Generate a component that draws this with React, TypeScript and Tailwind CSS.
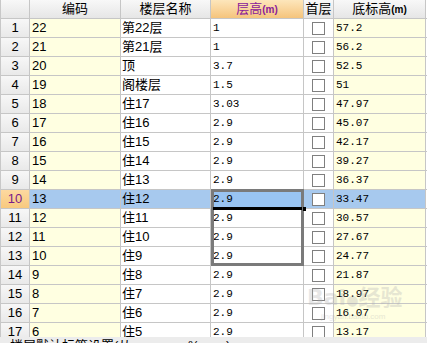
import React from "react";

type Floor = {
  code: string;
  name: string;
  height: string;
  base: string;
};

const FLOORS: Floor[] = [
  { code: "22", name: "第22层", height: "1", base: "57.2" },
  { code: "21", name: "第21层", height: "1", base: "56.2" },
  { code: "20", name: "顶", height: "3.7", base: "52.5" },
  { code: "19", name: "阁楼层", height: "1.5", base: "51" },
  { code: "18", name: "住17", height: "3.03", base: "47.97" },
  { code: "17", name: "住16", height: "2.9", base: "45.07" },
  { code: "16", name: "住15", height: "2.9", base: "42.17" },
  { code: "15", name: "住14", height: "2.9", base: "39.27" },
  { code: "14", name: "住13", height: "2.9", base: "36.37" },
  { code: "13", name: "住12", height: "2.9", base: "33.47" },
  { code: "12", name: "住11", height: "2.9", base: "30.57" },
  { code: "11", name: "住10", height: "2.9", base: "27.67" },
  { code: "10", name: "住9", height: "2.9", base: "24.77" },
  { code: "9", name: "住8", height: "2.9", base: "21.87" },
  { code: "8", name: "住7", height: "2.9", base: "18.97" },
  { code: "7", name: "住6", height: "2.9", base: "16.07" },
  { code: "6", name: "住5", height: "2.9", base: "13.17" },
];

const SELECTED = 9;

const sans = "font-['Liberation_Sans','Noto_Sans_CJK_SC',sans-serif]";
const mono = "font-['Liberation_Mono','Noto_Sans_CJK_SC',monospace]";

const Checkbox = () => (
  <span className="block w-[13px] h-[13px] border border-[#7f7f7f] bg-white" />
);

const HeaderRow = () => (
  <div className="flex h-[19px] border-b border-[#c6c6c6] text-[13px] text-black">
    <div className="w-[29px] shrink-0 border-r border-[#c6c6c6] bg-gradient-to-b from-[#f8f8f8] to-[#e6e6e6]" />
    <div className="w-[91px] shrink-0 border-r border-[#c6c6c6] bg-gradient-to-b from-[#f8f8f8] to-[#e6e6e6] flex items-center justify-center">
      编码
    </div>
    <div className="w-[90px] shrink-0 border-r border-[#c6c6c6] bg-gradient-to-b from-[#f8f8f8] to-[#e6e6e6] flex items-center justify-center">
      楼层名称
    </div>
    <div className="w-[93px] shrink-0 border-r border-[#c6c6c6] bg-gradient-to-b from-[#fde6bb] to-[#f5c47c] flex items-center justify-center text-[#8a1a9a]">
      层高<span className="text-[10px] font-bold">(m)</span>
    </div>
    <div className="w-[30px] shrink-0 border-r border-[#c6c6c6] bg-gradient-to-b from-[#f8f8f8] to-[#e6e6e6] flex items-center justify-center">
      首层
    </div>
    <div className="w-[92px] shrink-0 border-r border-[#c6c6c6] bg-gradient-to-b from-[#f8f8f8] to-[#e6e6e6] flex items-center justify-center">
      底标高<span className="text-[10px] font-bold">(m)</span>
    </div>
  </div>
);

const Row = ({ floor, index }: { floor: Floor; index: number }) => {
  const selected = index === SELECTED;
  const rowBg = selected ? "bg-[#a7c9ee]" : "";
  return (
    <div className="flex h-[19px] border-b border-[#c6c6c6] text-[13px] text-black">
      <div
        className={`w-[29px] shrink-0 border-r border-[#c6c6c6] flex items-center justify-center ${
          selected
            ? "bg-gradient-to-b from-[#fdd9a0] to-[#f8c97e] text-[#7a1a8a]"
            : "bg-gradient-to-b from-[#f7f7f7] to-[#e9e9e9]"
        }`}
      >
        {index + 1}
      </div>
      <div
        className={`w-[91px] shrink-0 border-r border-[#c6c6c6] flex items-center pl-[2px] ${
          selected ? rowBg : "bg-[#ffffe1]"
        }`}
      >
        {floor.code}
      </div>
      <div
        className={`w-[90px] shrink-0 border-r border-[#c6c6c6] flex items-center pl-[1px] ${
          selected ? rowBg : "bg-white"
        }`}
      >
        {floor.name}
      </div>
      <div
        className={`w-[93px] shrink-0 border-r border-[#c6c6c6] flex items-center pl-[2px] text-[11px] ${mono} ${
          selected ? "bg-[#99c4f2]" : "bg-white"
        }`}
      >
        {floor.height}
      </div>
      <div
        className={`w-[30px] shrink-0 border-r border-[#c6c6c6] flex items-center justify-center ${
          selected ? rowBg : "bg-white"
        }`}
      >
        <Checkbox />
      </div>
      <div
        className={`w-[92px] shrink-0 border-r border-[#c6c6c6] flex items-center pl-[2px] text-[11px] ${mono} ${
          selected ? rowBg : "bg-[#ffffe1]"
        }`}
      >
        {floor.base}
      </div>
    </div>
  );
};

export default function App() {
  return (
    <div className={`w-[427px] h-[343px] bg-white overflow-hidden ${sans}`}>
      <div className="relative h-[337px] overflow-hidden border-l border-[#c8c8c8]">
        <HeaderRow />
        {FLOORS.map((floor, i) => (
          <Row key={floor.code} floor={floor} index={i} />
        ))}

        {/* selection range */}
        <div className="absolute left-[210px] top-[189px] w-[93px] h-[77px] border-[3px] border-[#7a7a7a] pointer-events-none" />
        {/* active cell bottom / fill handle */}
        <div className="absolute left-[212px] top-[207px] w-[89px] h-[3px] bg-black" />
        <div className="absolute left-[302px] top-[207px] w-[3px] h-[4px] bg-black" />

        {/* watermark */}
        <div className="absolute left-[306px] top-[286px] flex flex-col items-start pointer-events-none opacity-30 whitespace-nowrap">
          <span className="text-[22px] leading-[24px] font-bold text-[#b0b0b0] font-['DejaVu_Sans','Noto_Sans_CJK_SC',sans-serif]">
            Bai<span className="text-[14px]">●</span>经验
          </span>
          <span className="text-[8px] leading-[10px] text-[#b0b0b0] pl-[14px]">jingyan.baidu.com</span>
        </div>
      </div>
      <div className="h-[6px] bg-[#ececec] relative overflow-hidden">
        <span className="absolute left-[10px] top-[1px] text-[13px] leading-[15px] text-black whitespace-nowrap">
          楼层默认标签设置(从
        </span>
        <span className="absolute left-[188px] top-[1px] text-[13px] leading-[15px] text-black">%</span>
        <span className="absolute left-[226px] top-[1px] text-[13px] leading-[15px] text-black">)</span>
      </div>
    </div>
  );
}
